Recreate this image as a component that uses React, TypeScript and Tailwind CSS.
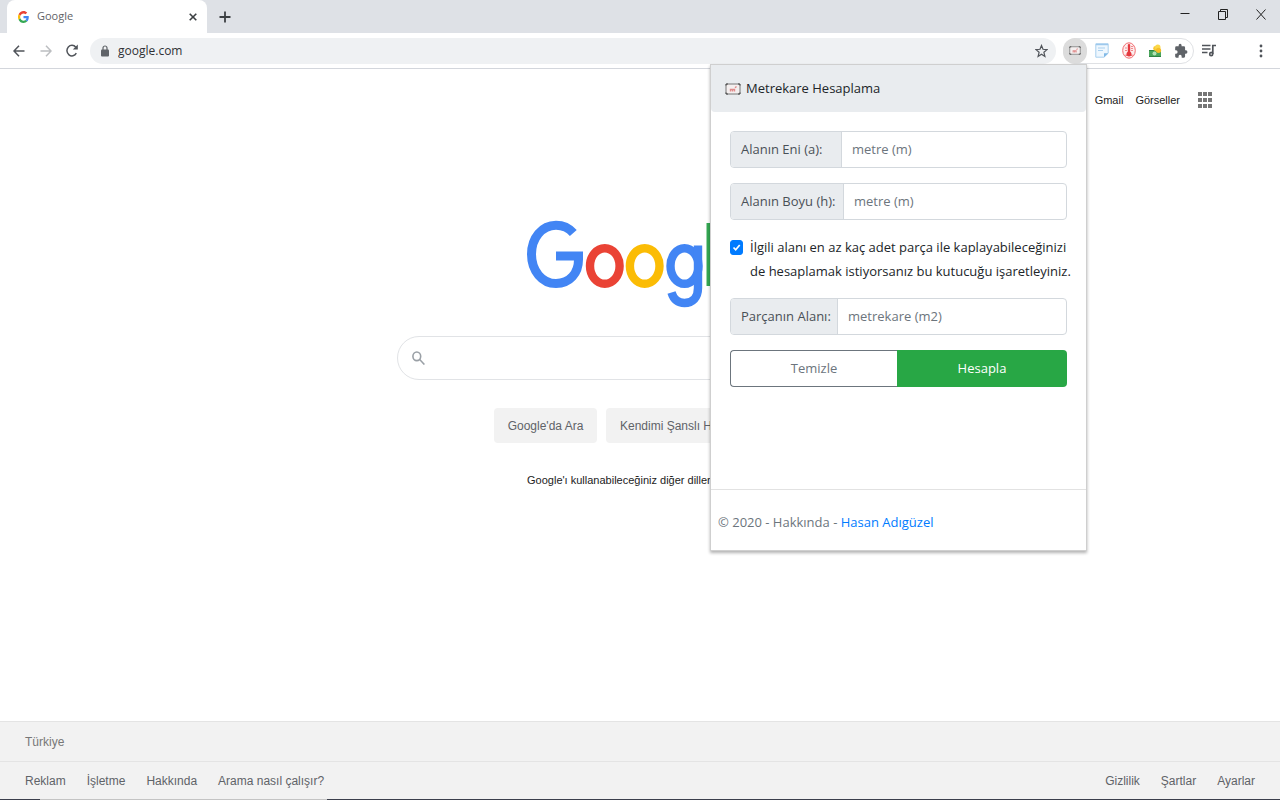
import { useState } from "react";
import type { ReactNode } from "react";

const leftLinks = ["Reklam", "İşletme", "Hakkında", "Arama nasıl çalışır?"];
const rightLinks = ["Gizlilik", "Şartlar", "Ayarlar"];

const uiFont = "font-['Open_Sans','Noto_Sans',sans-serif]";
const pageFont = "font-['Liberation_Sans',Arial,sans-serif]";

const GoogleG = () => (
  <svg viewBox="0 0 48 48" preserveAspectRatio="none" className="h-3 w-[11px]">
    <path
      fill="#ea4335"
      d="M24 9.5c3.5 0 6.7 1.2 9.2 3.6l6.9-6.9C35.9 2.4 30.5 0 24 0 14.6 0 6.5 5.4 2.6 13.2l8 6.2C12.4 13.7 17.7 9.5 24 9.5z"
    />
    <path
      fill="#4285f4"
      d="M47 24.5c0-1.6-.2-3.1-.4-4.5H24v9h12.9c-.6 3-2.200 5.500-4.700 7.200l7.700 6C44.4 38 47 31.8 47 24.5z"
    />
    <path
      fill="#fbbc05"
      d="M10.5 28.6c-.5-1.5-.8-3-.8-4.6s.3-3.1.8-4.6l-8-6.2C.9 16.5 0 20.1 0 24s.9 7.5 2.6 10.8z"
    />
    <path
      fill="#34a853"
      d="M24 48c6.5 0 11.9-2.1 15.9-5.8l-7.7-6c-2.2 1.5-4.9 2.3-8.2 2.3-6.3 0-11.6-4.2-13.5-9.9l-8 6.2C6.5 42.6 14.6 48 24 48z"
    />
  </svg>
);

const GoogleLogo = () => (
  <svg
    viewBox="0 0 228 88"
    role="img"
    aria-label="Google"
    className="h-[88px] w-[228px]"
    fill="none"
    strokeWidth="8.4"
  >
    <path
      stroke="#4285f4"
      strokeWidth="9"
      d="M47.3 13C43 8 37 5.2 30 5.2C16 5.2 5.5 18 5.5 34.3S16 63.5 30 63.5C44 63.5 52.5 53 52.5 39.5V36H30"
    />
    <ellipse stroke="#ea4335" cx="78.8" cy="46" rx="14.8" ry="17.8" />
    <ellipse stroke="#fbbc05" cx="118.7" cy="46" rx="14.8" ry="17.8" />
    <ellipse stroke="#4285f4" cx="158.5" cy="46" rx="14" ry="17.8" />
    <path
      stroke="#4285f4"
      d="M172 25.5V68C172 77.5 166.5 83 158.500 83C151.5 83 147.5 79 145.5 72.5"
    />
    <path stroke="#34a853" d="M184.7 3V66" />
    <path
      stroke="#ea4335"
      d="M197 49L221 37C218 31 213 28 208 28.2C200 28.5 195 36 195 46C195 56 201 63.8 209.5 63.8C215 63.8 219.5 61 223 56"
    />
  </svg>
);

const AreaIcon = ({ className }: { className: string }) => (
  <svg viewBox="0 0 16 12" className={className} fill="none">
    <rect x="1" y="1" width="14" height="10" rx="1" fill="#f4efef" stroke="#777" />
    <path d="M1 2.500V1h2M13 1h2v1.500M1 9.500V11h2M13 11h2V9.500" stroke="#444" />
    <path d="M5.500 8.500V6.500h4v2M7.500 6.500v2M10 4.800l1.500-1.300" stroke="#e08a8a" strokeWidth="1.400" />
  </svg>
);

const NoteIcon = () => (
  <svg viewBox="0 0 14 15" className="h-[15px] w-3.5" fill="none">
    <path d="M.8.8h12.4v9.4L9 14.2H.8z" fill="#eef7fe" stroke="#a9cfee" />
    <path d="M1 1.5h12" stroke="#9dc8ec" strokeWidth="1.5" />
    <path d="M13.2 10.2H9v4z" fill="#7fb8e6" />
    <path d="M3 5h7M3 7.5h5" stroke="#a9cfee" />
  </svg>
);

const ThermometerIcon = () => (
  <svg viewBox="0 0 14 17" className="h-[17px] w-3.5" fill="none">
    <ellipse cx="7" cy="8.5" rx="6.3" ry="7.7" fill="#fdecec" stroke="#f2696d" />
    <path d="M5.8 3.200a1.200 1.200 0 0 1 2.400 0v6.600a2.500 2.500 0 1 1-2.400 0z" fill="#e5383e" />
    <path d="M3 6h2M3 8.500h2M9 4.500h2M9 6.500h2M9 8.500h2" stroke="#f08a8d" />
    <path d="M3.500 13.200h7" stroke="#e5383e" />
  </svg>
);

const MoneyIcon = () => (
  <svg viewBox="0 0 14 14" className="h-3.5 w-3.5">
    <rect x="1" y="6" width="12" height="7" fill="#4aa65c" />
    <path d="M1 6h12v1H1zM1 12h12v1H1z" fill="#2f8243" />
    <circle cx="6.5" cy="9.5" r="2" fill="#b4e2b5" />
    <circle cx="7.6" cy="4.5" r="2.4" fill="#f8c932" />
    <circle cx="9.8" cy="3.2" r="2.7" fill="#fbd84a" />
    <circle cx="10.5" cy="6.3" r="2.6" fill="#f6bd27" />
  </svg>
);

const PuzzleIcon = () => (
  <svg viewBox="0 0 24 24" className="h-4 w-3.5" preserveAspectRatio="none" fill="#5f6368">
    <path d="M20.5 11H19V7a2 2 0 0 0-2-2h-4V3.5a2.5 2.5 0 0 0-5 0V5H4a2 2 0 0 0-2 2v3.8h1.5a2.7 2.7 0 0 1 0 5.4H2V20c0 1.1.9 2 2 2h3.8v-1.5a2.7 2.7 0 0 1 5.4 0V22H17a2 2 0 0 0 2-2v-4h1.5a2.5 2.5 0 0 0 0-5z" />
  </svg>
);

const ToolbarButton = ({
  label,
  className,
  children,
}: {
  label: string;
  className: string;
  children: ReactNode;
}) => (
  <button
    type="button"
    aria-label={label}
    className={`flex shrink-0 items-center justify-center ${className}`}
  >
    {children}
  </button>
);

const TabStrip = () => (
  <div className="flex h-[33px] items-stretch bg-[#dee1e6]">
    <div className="ml-[7px] flex w-[200px] items-center rounded-t-lg bg-white pr-2 pl-[11px]">
      <GoogleG />
      <span className="ml-2 flex-1 text-[11px] text-[#5f6368]">Google</span>
      <ToolbarButton label="Sekmeyi kapat" className="h-3 w-3">
        <svg viewBox="0 0 8 8" className="h-2 w-2" stroke="#3c4043" strokeWidth="1.6">
          <path d="M.7.7l6.6 6.6M7.3.7L.7 7.3" />
        </svg>
      </ToolbarButton>
    </div>
    <ToolbarButton label="Yeni sekme" className="w-9">
      <svg viewBox="0 0 12 12" className="h-3 w-3" stroke="#3c4043" strokeWidth="1.8">
        <path d="M6 .5v11M.5 6h11" />
      </svg>
    </ToolbarButton>
    <div className="ml-auto flex h-7">
      <ToolbarButton label="Küçült" className="w-[38px]">
        <svg viewBox="0 0 10 10" className="h-2.5 w-2.5" stroke="#222">
          <path d="M.5 4.5h9" />
        </svg>
      </ToolbarButton>
      <ToolbarButton label="Geri yükle" className="w-[38px]">
        <svg viewBox="0 0 10 11" className="h-[11px] w-2.5" fill="none" stroke="#222">
          <path d="M.5 2.5h7v8h-7zM2.500 2.500v-2h7v8h-2" />
        </svg>
      </ToolbarButton>
      <ToolbarButton label="Kapat" className="w-[38px]">
        <svg viewBox="0 0 10 11" className="h-[11px] w-2.5" stroke="#222">
          <path d="M.5.5l9 10M9.5.5l-9 10" />
        </svg>
      </ToolbarButton>
    </div>
  </div>
);

const Toolbar = () => (
  <div className="flex h-9 items-center border-b border-[#d3d6dc] bg-white pl-[5px]">
    <ToolbarButton label="Geri" className="h-6 w-[27px]">
      <svg viewBox="0 0 12 12" className="h-3 w-3" fill="none" stroke="#50545a" strokeWidth="1.5">
        <path d="M11.5 6H1.2M6 .8L1 6l5 5.2" />
      </svg>
    </ToolbarButton>
    <ToolbarButton label="İleri" className="h-6 w-[27px]">
      <svg viewBox="0 0 12 12" className="h-3 w-3" fill="none" stroke="#bcbec1" strokeWidth="1.5">
        <path d="M.5 6h10.3M6 .8L11 6l-5 5.2" />
      </svg>
    </ToolbarButton>
    <ToolbarButton label="Yenile" className="h-6 w-[26px]">
      <svg viewBox="0 0 12 13" className="h-[13px] w-3" fill="none" stroke="#50545a" strokeWidth="1.5">
        <path d="M10.3 9.2A5 5.3 0 1 1 9.8 3.2" />
        <path d="M11.8.4v5.2H6.8z" fill="#50545a" stroke="none" />
      </svg>
    </ToolbarButton>
    <div className="ml-[5px] flex h-[26px] flex-1 items-center rounded-full bg-[#eff1f3] pr-2 pl-2.5">
      <svg viewBox="0 0 10 12" className="h-3 w-2.5" fill="#5f6368">
        <rect x="1" y="4.5" width="8" height="7" rx="1" />
        <path d="M3 5V3a2 2 0 0 1 4 0v2" fill="none" stroke="#5f6368" strokeWidth="1.2" />
      </svg>
      <input
        aria-label="Adres çubuğu"
        defaultValue="google.com"
        className="ml-2 min-w-0 flex-1 text-xs text-[#303236] outline-none"
      />
      <ToolbarButton label="Yer işareti ekle" className="h-5 w-[13px]">
        <svg viewBox="0 0 13 14" className="h-3.5 w-[13px]" fill="none" stroke="#50545a" strokeWidth="1.2">
          <path d="M6.5 1.5l1.5 3.8 4 .3-3.1 2.7 1 4.2-3.4-2.3-3.4 2.300 1-4.200L1 5.600l4-.3z" />
        </svg>
      </ToolbarButton>
    </div>
    <div className="ml-[7px] flex h-[26px] items-center rounded-full border border-[#dfe1e4]">
      <ToolbarButton label="Metrekare Hesaplama" className="-ml-px h-[26px] w-6 rounded-full bg-[#dcdcdc]">
        <AreaIcon className="h-[9px] w-3" />
      </ToolbarButton>
      <ToolbarButton label="Notlar" className="h-6 w-[29px]">
        <NoteIcon />
      </ToolbarButton>
      <ToolbarButton label="Sıcaklık" className="h-6 w-[25px]">
        <ThermometerIcon />
      </ToolbarButton>
      <ToolbarButton label="Döviz" className="h-6 w-[27px]">
        <MoneyIcon />
      </ToolbarButton>
      <ToolbarButton label="Uzantılar" className="h-6 w-[25px]">
        <PuzzleIcon />
      </ToolbarButton>
    </div>
    <ToolbarButton label="Medya" className="h-6 w-[30px]">
      <svg viewBox="0 0 14 13" className="h-[13px] w-3.5" fill="none" stroke="#50545a" strokeWidth="1.7">
        <path d="M0 1.5h8.5M0 5h8.5M0 8.5h5.5M14 1.5h-3.2V10" />
        <ellipse cx="9.2" cy="10" rx="1.5" ry="1.7" />
      </svg>
    </ToolbarButton>
    <ToolbarButton label="Menü" className="mr-[9px] ml-[27px] h-6 w-5">
      <svg viewBox="0 0 4 14" className="h-3.5 w-1" fill="#50545a">
        <circle cx="2" cy="2" r="1.4" />
        <circle cx="2" cy="7" r="1.4" />
        <circle cx="2" cy="12" r="1.4" />
      </svg>
    </ToolbarButton>
  </div>
);

const MeasureField = ({
  id,
  label,
  placeholder,
  labelWidth,
}: {
  id: string;
  label: string;
  placeholder: string;
  labelWidth: string;
}) => (
  <div className="flex h-[37px] overflow-hidden rounded border border-[#d3d8dd]">
    <label
      htmlFor={id}
      className={`flex shrink-0 items-center border-r border-[#d3d8dd] bg-[#e9ecef] pl-2.5 whitespace-nowrap text-[#495057] ${labelWidth}`}
    >
      {label}
    </label>
    <input
      id={id}
      placeholder={placeholder}
      className="min-w-0 flex-1 px-2.5 text-[#495057] outline-none placeholder:text-[#6c757d]"
    />
  </div>
);

const Popup = () => {
  const [checked, setChecked] = useState(true);

  return (
    <section
      className={`absolute top-16 right-[193px] w-[377px] border border-[#cfcfcf] bg-white text-[13px] text-[#212529] shadow-[0_2px_3px_rgba(0,0,0,0.3)] ${uiFont}`}
    >
      <h1 className="flex h-[47px] items-center gap-[5px] rounded-b bg-[#e9ecef] pl-3.5">
        <AreaIcon className="h-3 w-4" />
        Metrekare Hesaplama
      </h1>
      <form className="px-[19px] pt-[19px]" onSubmit={(e) => e.preventDefault()}>
        <div className="flex flex-col gap-[15px]">
          <MeasureField id="width" label="Alanın Eni (a):" placeholder="metre (m)" labelWidth="w-[111px]" />
          <MeasureField id="height" label="Alanın Boyu (h):" placeholder="metre (m)" labelWidth="w-[113px]" />
          <div className="flex items-start gap-[7px]">
            <span className="relative mt-[5px] flex">
              <input
                id="pieces"
                type="checkbox"
                checked={checked}
                onChange={() => setChecked(!checked)}
                className="h-[15px] w-[13px] appearance-none rounded-[3px] border border-[#adb5bd] checked:border-[#007bff] checked:bg-[#007bff]"
              />
              {checked && (
                <svg
                  viewBox="0 0 13 15"
                  className="pointer-events-none absolute inset-0 h-[15px] w-[13px]"
                  fill="none"
                  stroke="#fff"
                  strokeWidth="1.7"
                >
                  <path d="M3.5 7.5l2.2 2.3 4-4.8" />
                </svg>
              )}
            </span>
            <label htmlFor="pieces" className="leading-6 whitespace-nowrap">
              İlgili alanı en az kaç adet parça ile kaplayabileceğinizi
              <br />
              de hesaplamak istiyorsanız bu kutucuğu işaretleyiniz.
            </label>
          </div>
          <MeasureField id="piece" label="Parçanın Alanı:" placeholder="metrekare (m2)" labelWidth="w-[107px]" />
          <div className="flex h-[37px]">
            <button type="reset" className="w-[167px] rounded-l border border-r-0 border-[#6c757d] text-[#6c757d]">
              Temizle
            </button>
            <button type="submit" className="flex-1 rounded-r bg-[#28a745] text-white">
              Hesapla
            </button>
          </div>
        </div>
      </form>
      <p className="mt-[102px] border-t border-[#e2e2e2] px-[7px] pt-5 pb-4 leading-6 text-[#6c757d]">
        © 2020 - Hakkında -{" "}
        <a href="#about" className="text-[#007bff]">
          Hasan Adıgüzel
        </a>
      </p>
    </section>
  );
};

const App = () => (
  <div className={`relative flex min-h-screen flex-col bg-white ${pageFont}`}>
    <header className={uiFont}>
      <TabStrip />
      <Toolbar />
    </header>

    <nav className="flex h-[62px] items-center justify-end pr-[68px] text-[11px] text-[#222]">
      <a href="#gmail">Gmail</a>
      <a href="#images" className="ml-3">
        Görseller
      </a>
      <button type="button" aria-label="Google uygulamaları" className="ml-[18px]">
        <svg viewBox="0 0 14 16" className="h-4 w-3.5" fill="#757575">
          {[0, 5, 10].map((x) =>
            [0, 6, 12].map((y) => <rect key={`${x}-${y}`} x={x} y={y} width="4" height="4" />)
          )}
        </svg>
      </button>
    </nav>

    <main className="flex flex-col items-center pt-[89px] pb-10">
      <GoogleLogo />
      <div className="mt-7 flex h-11 w-[486px] items-center rounded-full border border-[#e1e3e6] pl-3.5">
        <svg viewBox="0 0 13 14" className="h-3.5 w-[13px]" fill="none" stroke="#9aa0a6" strokeWidth="1.6">
          <ellipse cx="4.8" cy="5.3" rx="3.9" ry="4.3" />
          <path d="M7.7 8.5l4.7 5" />
        </svg>
        <input aria-label="Ara" className="ml-3 min-w-0 flex-1 text-sm outline-none" />
      </div>
      <div className="mt-7 flex gap-[9px] text-xs text-[#5f6368]">
        <button type="button" className="h-[35px] w-[103px] rounded bg-[#f2f2f2]">
          Google'da Ara
        </button>
        <button type="button" className="h-[35px] w-[180px] rounded bg-[#f2f2f2] pl-3.5 text-left">
          Kendimi Şanslı Hissediyorum
        </button>
      </div>
      <p className="mt-[29px] text-[11px] leading-4 text-[#222]">
        Google'ı kullanabileceğiniz diğer diller:{" "}
        <a href="#en" className="text-[#1a0dab]">
          English
        </a>
      </p>
    </main>

    <footer className="mt-auto border-t border-[#e4e4e4] bg-[#f2f2f2] text-xs text-[#5f6368]">
      <p className="flex h-10 items-center border-b border-[#e4e4e4] px-[25px] text-[#777]">Türkiye</p>
      <div className="flex h-[37px] items-center justify-between px-[25px]">
        <div className="flex gap-[21px]">
          {leftLinks.map((link) => (
            <a key={link} href="#footer">
              {link}
            </a>
          ))}
        </div>
        <div className="flex gap-[21px]">
          {rightLinks.map((link) => (
            <a key={link} href="#footer">
              {link}
            </a>
          ))}
        </div>
      </div>
      <div className="flex h-px bg-[#3b3f4c]">
        <div className="ml-10 w-[287px] bg-[#c4c4c4]"></div>
      </div>
    </footer>

    <Popup />
  </div>
);

export default App;
